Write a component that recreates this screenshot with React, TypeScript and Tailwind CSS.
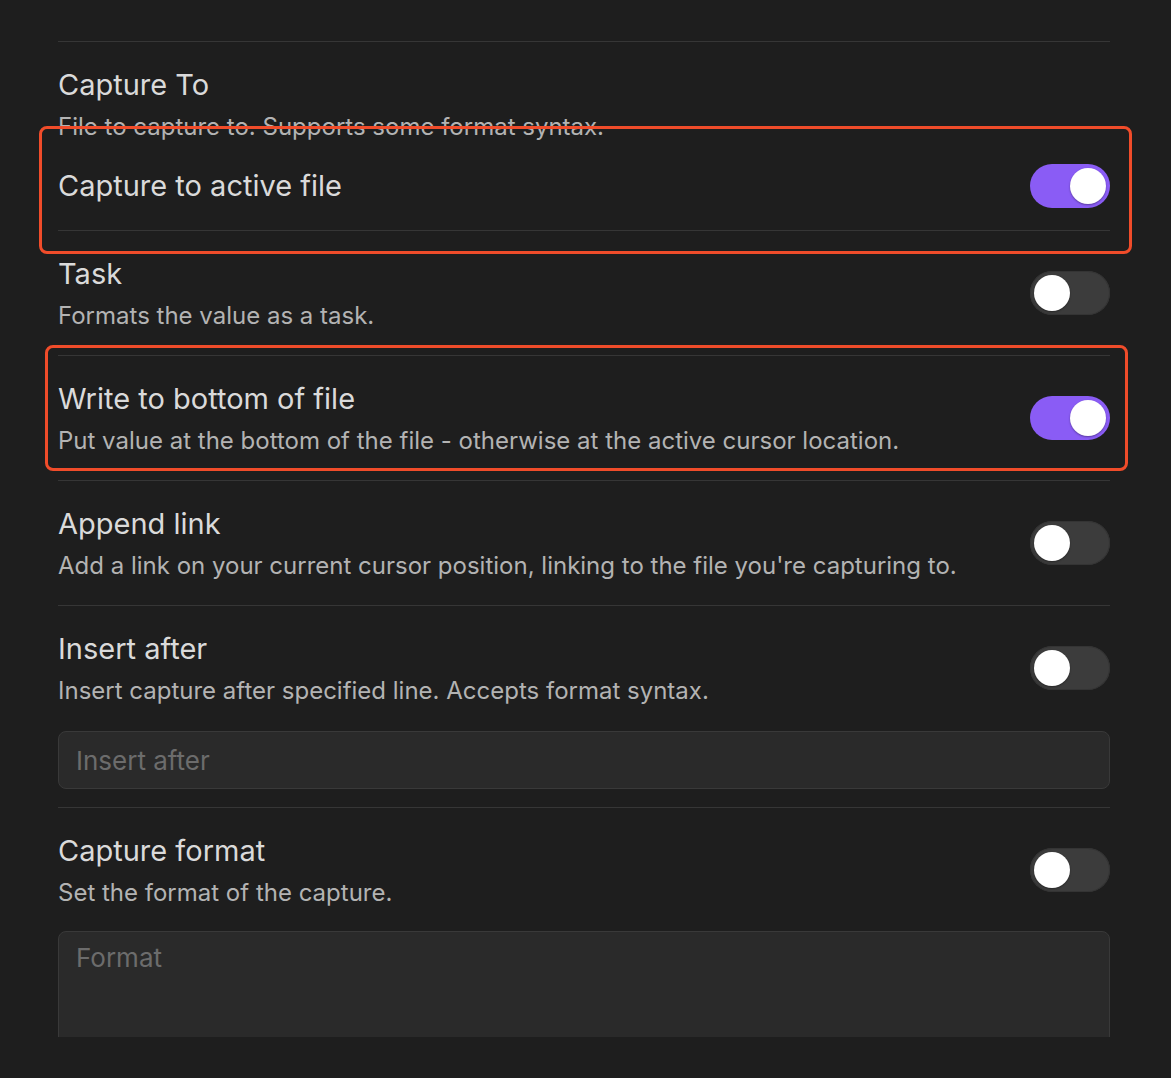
import React from 'react';

type Item = {
  name: string;
  desc?: string;
  on: boolean;
};

function Toggle({ on }: { on: boolean }) {
  return (
    <div
      className={
        'relative -my-[2px] h-[44px] w-[80px] shrink-0 rounded-full ' +
        (on ? 'bg-[#8a5cf5]' : 'bg-[#3c3c3c] shadow-[inset_0_0_0_1px_#343434]')
      }
    >
      <div
        className={
          'absolute top-[4px] h-[36px] w-[36px] rounded-full bg-white shadow-[0_1px_2px_rgba(0,0,0,0.35)] ' +
          (on ? 'left-[40px]' : 'left-[4px]')
        }
      />
    </div>
  );
}

function SettingText({ name, desc }: { name: string; desc?: string }) {
  return (
    <div className="min-w-0 flex-1">
      <p className="text-[29px] leading-[40px] text-[#dadada]">{name}</p>
      {desc && <p className="mt-[6px] text-[24px] leading-[32px] text-[#b3b3b3]">{desc}</p>}
    </div>
  );
}

function SettingRow({
  item,
  border = true,
  pb = 'pb-[23px]',
}: {
  item: Item;
  border?: boolean;
  pb?: string;
}) {
  return (
    <div
      className={
        'flex items-center gap-6 pt-[23px] ' + pb + (border ? ' border-t border-[#363636]' : '')
      }
    >
      <SettingText name={item.name} desc={item.desc} />
      <Toggle on={item.on} />
    </div>
  );
}

export default function App() {
  return (
    <div
      className="relative h-[1078px] w-full overflow-hidden bg-[#1e1e1e]"
      style={{ fontFamily: 'Inter, "Noto Sans", "Liberation Sans", sans-serif' }}
    >
      <div className="h-[1037px] overflow-hidden">
        <div className="ml-[58px] w-[1052px] pt-[41px]">
          {/* Capture To — its file input is replaced by the active-file toggle below */}
          <div className="border-t border-[#363636] pt-[23px]">
            <SettingText name="Capture To" desc="File to capture to. Supports some format syntax." />
          </div>
          <SettingRow item={{ name: 'Capture to active file', on: true }} border={false} pb="pb-[24px]" />

          <SettingRow item={{ name: 'Task', desc: 'Formats the value as a task.', on: false }} />
          <SettingRow
            item={{
              name: 'Write to bottom of file',
              desc: 'Put value at the bottom of the file - otherwise at the active cursor location.',
              on: true,
            }}
          />
          <SettingRow
            item={{
              name: 'Append link',
              desc: "Add a link on your current cursor position, linking to the file you're capturing to.",
              on: false,
            }}
          />

          <SettingRow
            item={{
              name: 'Insert after',
              desc: 'Insert capture after specified line. Accepts format syntax.',
              on: false,
            }}
            pb="pb-[24px]"
          />
          <div className="mb-[18px] flex h-[58px] items-center rounded-[8px] border border-[#393939] bg-[#2a2a2a] px-[17px]">
            <span className="text-[26px] text-[#6c6c6c]">Insert after</span>
          </div>

          <SettingRow
            item={{ name: 'Capture format', desc: 'Set the format of the capture.', on: false }}
            pb="pb-[22px]"
          />
          <div className="h-[160px] rounded-[8px] border border-[#393939] bg-[#2a2a2a] px-[17px] pt-[9px]">
            <span className="text-[26px] leading-[34px] text-[#6c6c6c]">Format</span>
          </div>
        </div>
      </div>

      {/* highlight boxes */}
      <div className="pointer-events-none absolute left-[39px] top-[126px] h-[128px] w-[1093px] rounded-[8px] border-[3px] border-[#f04c2a]" />
      <div className="pointer-events-none absolute left-[45px] top-[345px] h-[126px] w-[1083px] rounded-[8px] border-[3px] border-[#f04c2a]" />
    </div>
  );
}
